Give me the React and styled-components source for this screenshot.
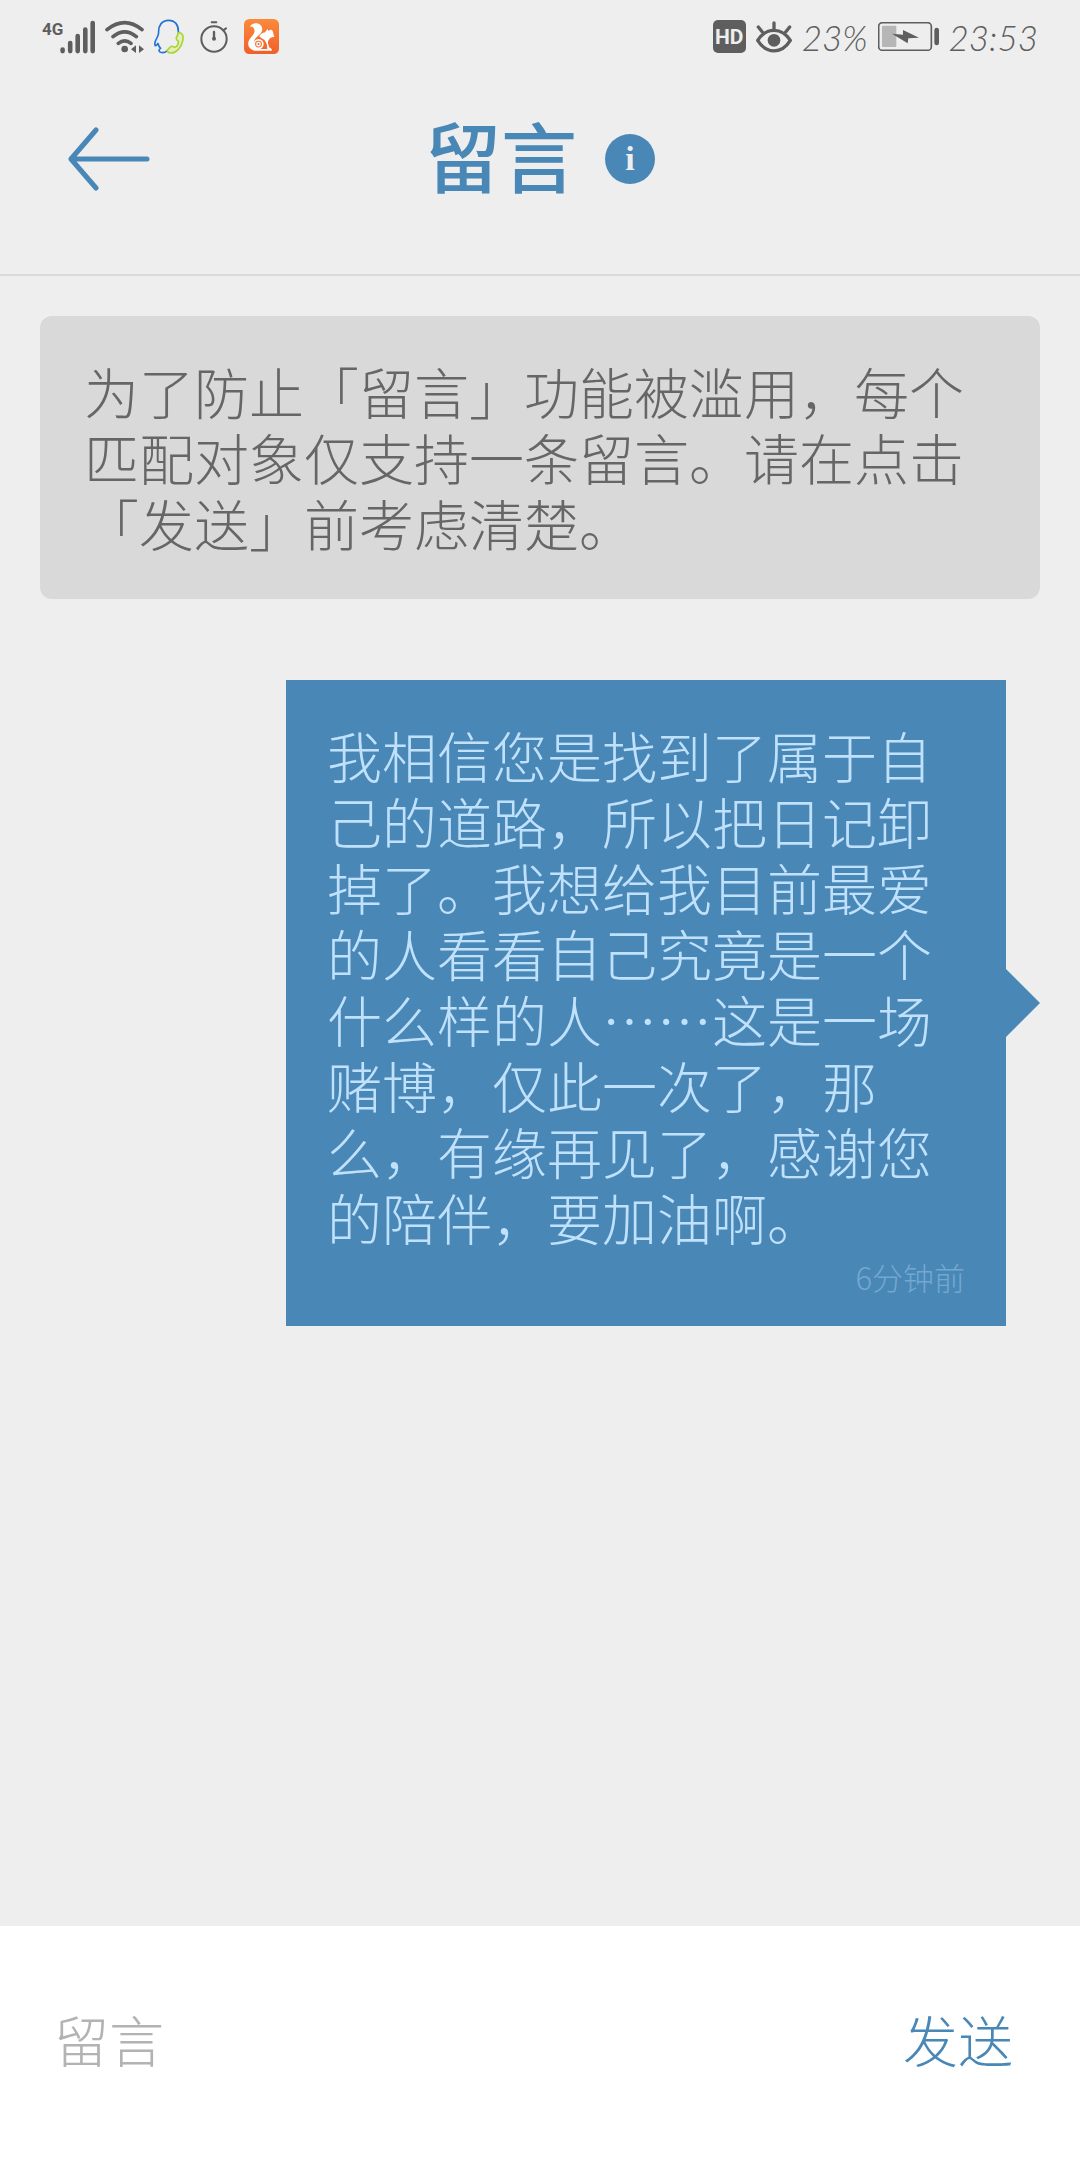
import React from "react";
import styled, { createGlobalStyle } from "styled-components";

const blue = "#4987b7";
const ink = "#5e5e5e";

const GlobalStyle = createGlobalStyle`
  * { box-sizing: border-box; }
  body {
    margin: 0;
    background: #eeeeee;
    font-family: "Noto Sans CJK SC", sans-serif;
    font-weight: 300;
    text-spacing-trim: space-all;
  }
`;

const Page = styled.div`
  display: flex;
  flex-direction: column;
  min-height: 100vh;
`;

const StatusBar = styled.div`
  display: flex;
  align-items: center;
  justify-content: space-between;
  height: 73px;
  padding: 0 42px;
  color: ${ink};
`;

const StatusGroup = styled.div`
  display: flex;
  align-items: center;
  gap: ${(p) => p.$gap}px;
`;

const StatusText = styled.span`
  font: italic 300 35px/40px Lato, sans-serif;
`;

const HdBadge = styled.span`
  width: 33px;
  height: 33px;
  border-radius: 5px;
  background: ${ink};
  color: #eeeeee;
  font: 700 21px/34px Roboto, sans-serif;
  text-align: center;
`;

const Icon = styled.svg`
  display: block;
  flex: none;
  width: ${(p) => p.$w}px;
  height: ${(p) => p.$h}px;
`;

const Header = styled.header`
  display: grid;
  grid-template-columns: 1fr auto 1fr;
  align-items: center;
  padding: 38px 64px 67px;
  border-bottom: 2px solid #d9d9d9;
  color: ${blue};
`;

const BackButton = styled.button`
  justify-self: start;
  padding: 12px 4px;
  border: 0;
  background: none;
  color: inherit;
`;

const TitleGroup = styled.div`
  display: flex;
  align-items: center;
  gap: 28px;
`;

const Title = styled.h1`
  margin: 0;
  padding-bottom: 10px;
  font-size: 76px;
  line-height: 86px;
  font-weight: 500;
`;

const InfoButton = styled.button`
  width: 50px;
  height: 50px;
  padding: 0;
  border: 0;
  border-radius: 50%;
  background: ${blue};
  color: #eeeeee;
  font: 700 34px/50px "Liberation Serif", serif;
`;

const Main = styled.main`
  flex: 1;
  display: flex;
  flex-direction: column;
  gap: 81px;
  padding: 40px;
`;

const Notice = styled.p`
  margin: 0;
  padding: 41px 44px 44px;
  border-radius: 12px;
  background: #d9d9d9;
  color: #666666;
  font-size: 55px;
  line-height: 66px;
`;

const MessageRow = styled.div`
  display: flex;
  justify-content: flex-end;
`;

const Bubble = styled.article`
  position: relative;
  width: 72%;
  margin-right: 34px;
  padding: 41px 41px 25px;
  background: ${blue};
  color: #c0e1fb;

  &::after {
    content: "";
    position: absolute;
    left: 100%;
    top: 50%;
    margin-top: -34px;
    border: 34px solid transparent;
    border-right-width: 0;
    border-left-color: ${blue};
  }
`;

const MessageText = styled.p`
  margin: 0;
  font-size: 55px;
  line-height: 66px;
`;

const Time = styled.time`
  display: block;
  padding-top: 4px;
  color: #75a8cf;
  font-size: 31px;
  line-height: 48px;
  text-align: right;
`;

const Composer = styled.form`
  display: flex;
  align-items: center;
  height: 234px;
  padding: 0 67px 10px 54px;
  background: #ffffff;
`;

const MessageInput = styled.input`
  flex: 1;
  min-width: 0;
  padding: 0;
  border: 0;
  outline: 0;
  background: none;
  color: #666666;
  font: inherit;
  font-size: 55px;
  line-height: 80px;

  &::placeholder {
    color: #b3b3b3;
    opacity: 1;
  }
`;

const SendButton = styled.button`
  padding: 0;
  border: 0;
  background: none;
  color: ${blue};
  font: inherit;
  font-size: 55px;
  line-height: 80px;
`;

const SignalIcon = () => (
  <Icon $w={53} $h={34} viewBox="0 0 53 34" fill={ink} aria-label="4G">
    <text x="0" y="15" fontFamily="Roboto, sans-serif" fontWeight="700" fontSize="17">4G</text>
    <g stroke={ink} strokeWidth="4.6" strokeLinecap="round">
      <path d="M20.6 29.5v1.6M28.2 23v8.1M35.7 16v15.1M43.3 9.5v21.6M50.7 3v28.1" />
    </g>
  </Icon>
);

const WifiIcon = () => (
  <Icon $w={39} $h={34} viewBox="224 57 117 102" fill="none" stroke={ink} strokeWidth="11" strokeLinecap="round">
    <path d="M230 86Q283 44 335 86M248 107Q283 78 318 107M264 127Q283 112 302 127" />
    <circle cx="283" cy="144" r="10" fill={ink} stroke="none" />
    <path d="M317 133v23l-15-11zM326 133v23l15-11z" fill={ink} stroke="none" />
  </Icon>
);

const PenguinIcon = () => (
  <Icon $w={30} $h={35} viewBox="376 56 91 106" fill="none" strokeLinecap="round" strokeLinejoin="round" strokeWidth="5">
    <path stroke="#2272d8" d="M450 98C451 72 439 60 420 60S389 74 390 97C390 104 388 108 385 113C379 123 377 132 380 137C383 137 386 133 388 130C390 137 392 141 396 145C390 148 389 155 396 157C404 159 411 157 415 153" />
    <path stroke="#aad336" fill="#e3efb9" d="M450 98C461 96 467 107 463 122C459 143 443 160 426 159C416 158 414 151 419 147L428 139C432 137 436 142 440 142C446 139 450 132 450 124C446 121 442 118 444 113Z" />
  </Icon>
);

const TimerIcon = () => (
  <Icon $w={28} $h={34} viewBox="514 60 84 100" fill="none" stroke={ink} strokeWidth="6" strokeLinecap="round">
    <circle cx="556" cy="116" r="38" />
    <path d="M549 66h14M584 90l8-6" />
    <path d="M556 95v20" strokeWidth="7" />
    <circle cx="556" cy="115" r="3" fill={ink} />
  </Icon>
);

const SquirrelIcon = () => (
  <Icon $w={35} $h={35} viewBox="279 27 106 106">
    <defs>
      <linearGradient id="squirrel-bg" x1="0" y1="0" x2="0" y2="1">
        <stop offset="0" stopColor="#fb8a3c" />
        <stop offset="1" stopColor="#f0602a" />
      </linearGradient>
    </defs>
    <rect x="279" y="27" width="106" height="106" rx="16" fill="url(#squirrel-bg)" />
    <path fill="#fff" d="M297 50C304 39 320 37 329 45C337 53 335 64 329 71C321 80 309 86 309 99C309 110 316 117 328 118H350V123H312C298 120 290 110 292 98C295 84 310 76 311 64C311 54 305 50 297 50Z" />
    <path fill="#fff" d="M325 79C329 72 335 68 343 67L350 57L354 64C360 55 367 60 368 72L371 82C363 81 358 85 353 91C349 98 354 107 356 113L363 118V123H349C351 110 348 98 340 90C335 86 330 84 325 79Z" />
    <circle cx="323" cy="103" r="13" fill="#f4702f" stroke="#fff" strokeWidth="5" />
    <rect x="318" y="98" width="10" height="10" rx="4" fill="none" stroke="#fff" strokeWidth="4" />
  </Icon>
);

const EyeIcon = () => (
  <Icon $w={36} $h={34} viewBox="180 60 108 100" fill="none" stroke={ink} strokeWidth="10" strokeLinecap="round" strokeLinejoin="round">
    <path d="M185 120C211 80 257 80 283 120C257 162 211 162 185 120Z" />
    <path d="M234 68v18M187 80l12 15M281 80l-12 15" />
    <circle cx="234" cy="120" r="19" fill={ink} stroke="none" />
  </Icon>
);

const BatteryIcon = () => (
  <Icon $w={61} $h={29} viewBox="533 66 183 87">
    <rect x="535" y="68" width="158" height="83" rx="11" fill="none" stroke={ink} strokeWidth="5" />
    <rect x="545" y="77" width="43" height="64" rx="3" fill="#b6b6b6" />
    <rect x="702" y="83" width="14" height="53" rx="7" fill={ink} />
    <path d="M575 101L608 104V90L656 113L624 115L622 130Z" fill={ink} />
  </Icon>
);

const BackArrow = () => (
  <Icon $w={82} $h={64} viewBox="0 0 82 64" fill="none" stroke="currentColor" strokeWidth="5" strokeLinecap="round" strokeLinejoin="round">
    <path d="M28 3L3 32L28 61M3 32H79" />
  </Icon>
);

export default function App() {
  return (
    <Page>
      <GlobalStyle />
      <StatusBar>
        <StatusGroup $gap={16}>
          <StatusGroup $gap={10}>
            <SignalIcon />
            <WifiIcon />
            <PenguinIcon />
          </StatusGroup>
          <TimerIcon />
          <SquirrelIcon />
        </StatusGroup>
        <StatusGroup $gap={10}>
          <HdBadge>HD</HdBadge>
          <EyeIcon />
          <StatusText>23%</StatusText>
          <BatteryIcon />
          <StatusText>23:53</StatusText>
        </StatusGroup>
      </StatusBar>
      <Header>
        <BackButton type="button" aria-label="返回">
          <BackArrow />
        </BackButton>
        <TitleGroup>
          <Title>留言</Title>
          <InfoButton type="button">i</InfoButton>
        </TitleGroup>
      </Header>
      <Main>
        <Notice>为了防止「留言」功能被滥用，每个匹配对象仅支持一条留言。请在点击「发送」前考虑清楚。</Notice>
        <MessageRow>
          <Bubble>
            <MessageText>
              我相信您是找到了属于自己的道路，所以把日记卸掉了。我想给我目前最爱的人看看自己究竟是一个什么样的人……这是一场赌博，仅此一次了，那么，有缘再见了，感谢您的陪伴，要加油啊。
            </MessageText>
            <Time>6分钟前</Time>
          </Bubble>
        </MessageRow>
      </Main>
      <Composer onSubmit={(e) => e.preventDefault()}>
        <MessageInput type="text" placeholder="留言" aria-label="留言" />
        <SendButton type="submit">发送</SendButton>
      </Composer>
    </Page>
  );
}
